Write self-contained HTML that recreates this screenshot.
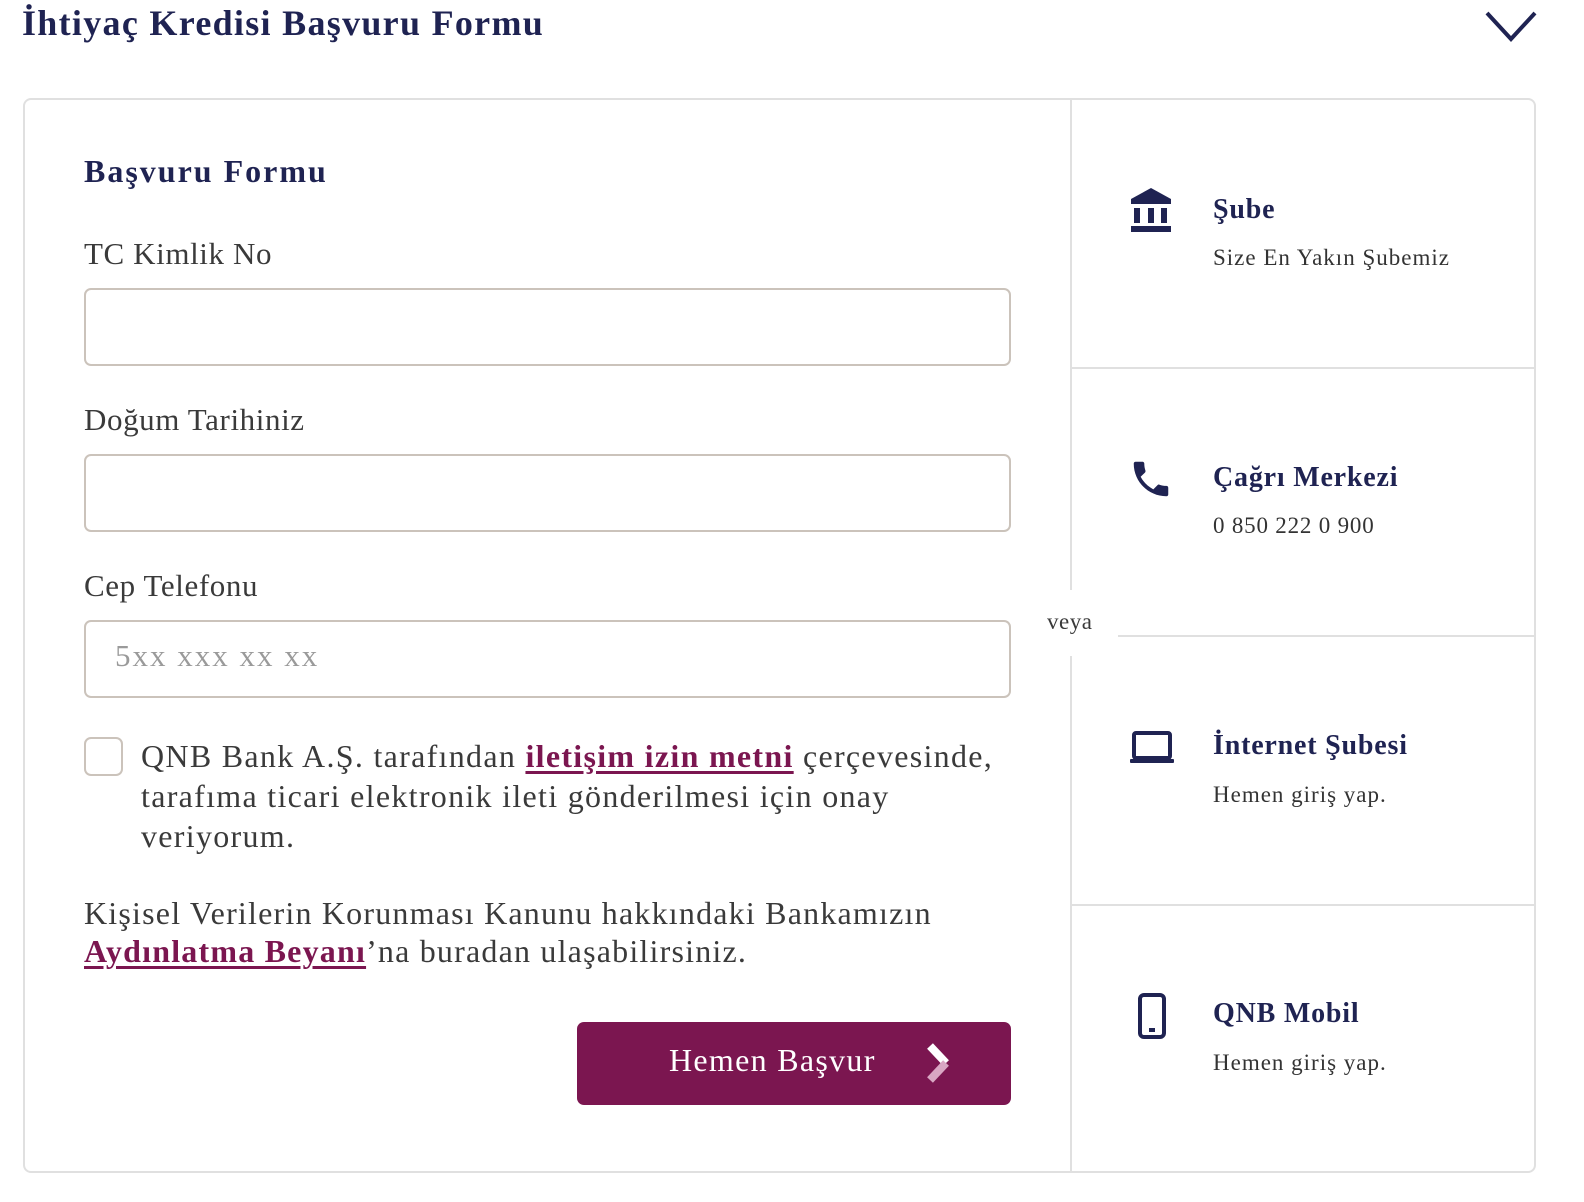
<!DOCTYPE html>
<html><head><meta charset="utf-8"><style>
*{box-sizing:border-box;margin:0;padding:0}
body{width:1584px;height:1202px;background:#fff;font-family:"Liberation Serif",serif;color:#3a3a3a;position:relative;overflow:hidden}
.a{position:absolute;white-space:nowrap}
.nav{color:#1f2352}
.title{left:22px;top:2px;font-size:36px;font-weight:bold;letter-spacing:1.3px}
.box{left:23px;top:98px;width:1513px;height:1075px;border:2px solid #e0e0e0;border-radius:8px}
.lbl{font-size:31px;left:84px;letter-spacing:0.6px}
.inp{left:84px;width:927px;height:78px;border:2px solid #cbc3bb;border-radius:7px}
.rt{font-size:28px;font-weight:bold;left:1213px;letter-spacing:0.8px}
.rs{font-size:23px;left:1213px;color:#333;letter-spacing:1px}
.hl{height:2px;background:#e0e0e0}
a{color:#7b1650;font-weight:bold;text-decoration:underline;text-decoration-thickness:3px;text-underline-offset:4px}
</style></head><body>
<div class="a nav title">İhtiyaç Kredisi Başvuru Formu</div>
<svg class="a" style="left:1484px;top:10px" width="54" height="34" viewBox="0 0 54 34"><path d="M3 3 L27 29 L51 3" fill="none" stroke="#1f2352" stroke-width="4"/></svg>
<div class="a box"></div>
<div class="a" style="left:1070px;top:99px;width:2px;height:491px;background:#e0e0e0"></div>
<div class="a" style="left:1070px;top:656px;width:2px;height:516px;background:#e0e0e0"></div>
<div class="a hl" style="left:1071px;top:367px;width:464px"></div>
<div class="a hl" style="left:1118px;top:635px;width:417px"></div>
<div class="a hl" style="left:1071px;top:904px;width:464px"></div>
<div class="a" style="left:1047px;top:609px;font-size:23px;letter-spacing:0.5px">veya</div>

<div class="a nav" style="left:84px;top:153px;font-size:32px;font-weight:bold;letter-spacing:2px">Başvuru Formu</div>
<div class="a lbl" style="top:236px">TC Kimlik No</div>
<div class="a inp" style="top:288px"></div>
<div class="a lbl" style="top:402px">Doğum Tarihiniz</div>
<div class="a inp" style="top:454px"></div>
<div class="a lbl" style="top:568px">Cep Telefonu</div>
<div class="a inp" style="top:620px"></div>
<div class="a" style="left:115px;top:638px;font-size:31px;color:#9a9a9a;letter-spacing:2px">5xx xxx xx xx</div>
<div class="a" style="left:84px;top:737px;width:39px;height:39px;border:2px solid #cbc3bb;border-radius:7px"></div>
<div class="a" style="left:141px;top:736px;font-size:32px;line-height:40px;letter-spacing:1.3px">QNB Bank A.Ş. tarafından <a>iletişim izin metni</a> çerçevesinde,<br>tarafıma ticari elektronik ileti gönderilmesi için onay<br>veriyorum.</div>
<div class="a" style="left:84px;top:894px;font-size:32px;line-height:38px;letter-spacing:1.2px">Kişisel Verilerin Korunması Kanunu hakkındaki Bankamızın<br><a>Aydınlatma Beyanı</a>’na buradan ulaşabilirsiniz.</div>
<div class="a" style="left:577px;top:1022px;width:434px;height:83px;background:#7b1650;border-radius:7px"></div>
<div class="a" style="left:669px;top:1042px;font-size:32px;color:#fff;letter-spacing:1.3px">Hemen Başvur</div>
<svg class="a" style="left:924px;top:1042px" width="28" height="42" viewBox="0 0 28 42"><path d="M6 4 L22 21" stroke="#fff" stroke-width="8" fill="none"/><path d="M22 21 L6 38" stroke="#d9a7c3" stroke-width="8" fill="none"/></svg>

<svg class="a" style="left:1130px;top:188px" width="42" height="45" viewBox="0 0 42 45"><path d="M21 0 L41 11 L41 16 L1 16 L1 11Z" fill="#1f2352"/><rect x="4" y="20" width="6" height="15" fill="#1f2352"/><rect x="18" y="20" width="6" height="15" fill="#1f2352"/><rect x="31" y="20" width="6" height="15" fill="#1f2352"/><rect x="1" y="38" width="40" height="6" fill="#1f2352"/></svg>
<div class="a nav rt" style="top:194px">Şube</div>
<div class="a rs" style="top:245px">Size En Yakın Şubemiz</div>

<svg class="a" style="left:1128px;top:456px" width="46" height="46" viewBox="0 0 24 24"><path fill="#1f2352" d="M6.6 10.8c1.4 2.8 3.8 5.1 6.6 6.6l2.2-2.2c.3-.3.7-.4 1-.2 1.1.4 2.3.6 3.6.6.6 0 1 .4 1 1V20c0 .6-.4 1-1 1C10.6 21 3 13.4 3 4c0-.6.4-1 1-1h3.5c.6 0 1 .4 1 1 0 1.3.2 2.5.6 3.6.1.3 0 .7-.2 1z"/></svg>
<div class="a nav rt" style="top:462px">Çağrı Merkezi</div>
<div class="a rs" style="top:513px;letter-spacing:0.8px">0 850 222 0 900</div>

<svg class="a" style="left:1129px;top:731px" width="46" height="34" viewBox="0 0 46 34"><rect x="5" y="2" width="36" height="25" rx="2" fill="none" stroke="#1f2352" stroke-width="4"/><rect x="1" y="28" width="44" height="4" rx="1" fill="#1f2352"/></svg>
<div class="a nav rt" style="top:730px">İnternet Şubesi</div>
<div class="a rs" style="top:782px">Hemen giriş yap.</div>

<svg class="a" style="left:1137px;top:993px" width="30" height="46" viewBox="0 0 30 46"><rect x="3" y="2" width="24" height="42" rx="4" fill="none" stroke="#1f2352" stroke-width="4"/><rect x="12" y="35" width="6" height="4" fill="#1f2352"/></svg>
<div class="a nav rt" style="top:998px">QNB Mobil</div>
<div class="a rs" style="top:1050px">Hemen giriş yap.</div>
</body></html>
